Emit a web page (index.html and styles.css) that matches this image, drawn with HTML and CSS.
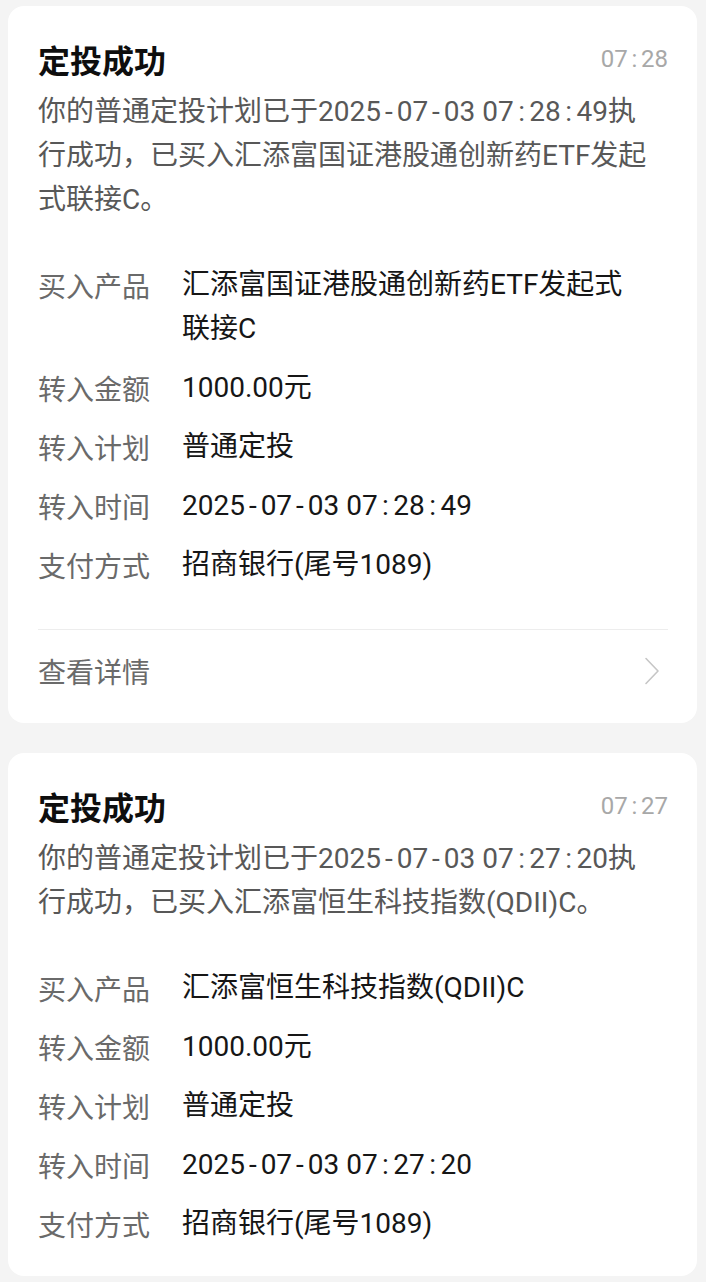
FILE: index.html
```html
<!DOCTYPE html>
<html lang="zh-CN">
<head>
<meta charset="utf-8">
<title>定投成功</title>
<link rel="stylesheet" href="styles.css">
</head>
<body>
<div class="page">
  <section class="card">
    <div class="head">
      <h2 class="title">定投成功</h2>
      <span class="time">07<i class="sep">:</i>28</span>
    </div>
    <p class="desc">你的普通定投计划已于<span class="dt">2025<i class="sep">-</i>07<i class="sep">-</i>03 07<i class="sep">:</i>28<i class="sep">:</i>49</span>执<br>行成功，已买入汇添富国证港股通创新药ETF发起<br>式联接C。</p>
    <div class="rows">
      <div class="row"><span class="label">买入产品</span><span class="value">汇添富国证港股通创新药ETF发起式<br>联接C</span></div>
      <div class="row"><span class="label">转入金额</span><span class="value">1000.00元</span></div>
      <div class="row"><span class="label">转入计划</span><span class="value">普通定投</span></div>
      <div class="row"><span class="label">转入时间</span><span class="value"><span class="dt">2025<i class="sep">-</i>07<i class="sep">-</i>03 07<i class="sep">:</i>28<i class="sep">:</i>49</span></span></div>
      <div class="row"><span class="label">支付方式</span><span class="value">招商银行(尾号1089)</span></div>
    </div>
    <div class="footer">
      <span class="more">查看详情</span>
      <svg class="chev" width="16" height="28" viewBox="0 0 16 28"><polyline points="2,1.5 14,14 2,26.5" fill="none" stroke="#c6c6c6" stroke-width="1.6" stroke-linecap="round" stroke-linejoin="round"/></svg>
    </div>
  </section>

  <section class="card">
    <div class="head">
      <h2 class="title">定投成功</h2>
      <span class="time">07<i class="sep">:</i>27</span>
    </div>
    <p class="desc">你的普通定投计划已于<span class="dt">2025<i class="sep">-</i>07<i class="sep">-</i>03 07<i class="sep">:</i>27<i class="sep">:</i>20</span>执<br>行成功，已买入汇添富恒生科技指数(QDII)C。</p>
    <div class="rows">
      <div class="row"><span class="label">买入产品</span><span class="value">汇添富恒生科技指数(QDII)C</span></div>
      <div class="row"><span class="label">转入金额</span><span class="value">1000.00元</span></div>
      <div class="row"><span class="label">转入计划</span><span class="value">普通定投</span></div>
      <div class="row"><span class="label">转入时间</span><span class="value"><span class="dt">2025<i class="sep">-</i>07<i class="sep">-</i>03 07<i class="sep">:</i>27<i class="sep">:</i>20</span></span></div>
      <div class="row"><span class="label">支付方式</span><span class="value">招商银行(尾号1089)</span></div>
    </div>
  </section>
</div>
</body>
</html>
```

FILE: styles.css
```css
html, body {
  margin: 0;
  padding: 0;
  background: #f4f4f4;
}
body {
  font-family: Roboto, "Noto Sans CJK SC", sans-serif;
  width: 706px;
  height: 1282px;
  overflow: hidden;
}
.page {
  padding: 6px 9px 0 8px;
  display: flex;
  flex-direction: column;
  gap: 30px;
}
.card {
  background: #ffffff;
  border-radius: 16px;
  padding: 31px 29px 30px 30px;
}
.head {
  display: flex;
  justify-content: space-between;
  align-items: center;
  height: 44px;
}
.title {
  margin: 0;
  font-family: "Noto Sans CJK SC", sans-serif;
  font-size: 32px;
  font-weight: 700;
  line-height: 44px;
  color: #0e0e0e;
}
.time {
  font-size: 24px;
  line-height: 44px;
  color: #a8a8a8;
}
.sep {
  font-style: normal;
  display: inline-block;
  width: 0.55em;
  text-align: center;
}
.dt .sep {
  width: 0.56em;
}
.desc {
  margin: 9px 0 0 0;
  font-size: 28px;
  line-height: 44px;
  color: #585858;
}
.rows {
  margin-top: 41px;
  display: flex;
  flex-direction: column;
  gap: 15px;
}
.row {
  display: flex;
  font-size: 28px;
  line-height: 44px;
}
.label {
  width: 144px;
  flex-shrink: 0;
  font-family: "Noto Sans CJK SC", sans-serif;
  color: #6a6a6a;
}
.value {
  color: #161616;
}
.footer {
  margin-top: 42px;
  border-top: 1px solid #ededed;
  padding-top: 19px;
  display: flex;
  justify-content: space-between;
  align-items: center;
  height: 44px;
  box-sizing: content-box;
}
.more {
  font-family: "Noto Sans CJK SC", sans-serif;
  font-size: 28px;
  line-height: 44px;
  color: #6a6a6a;
}
.chev {
  margin-right: 8px;
}
```
